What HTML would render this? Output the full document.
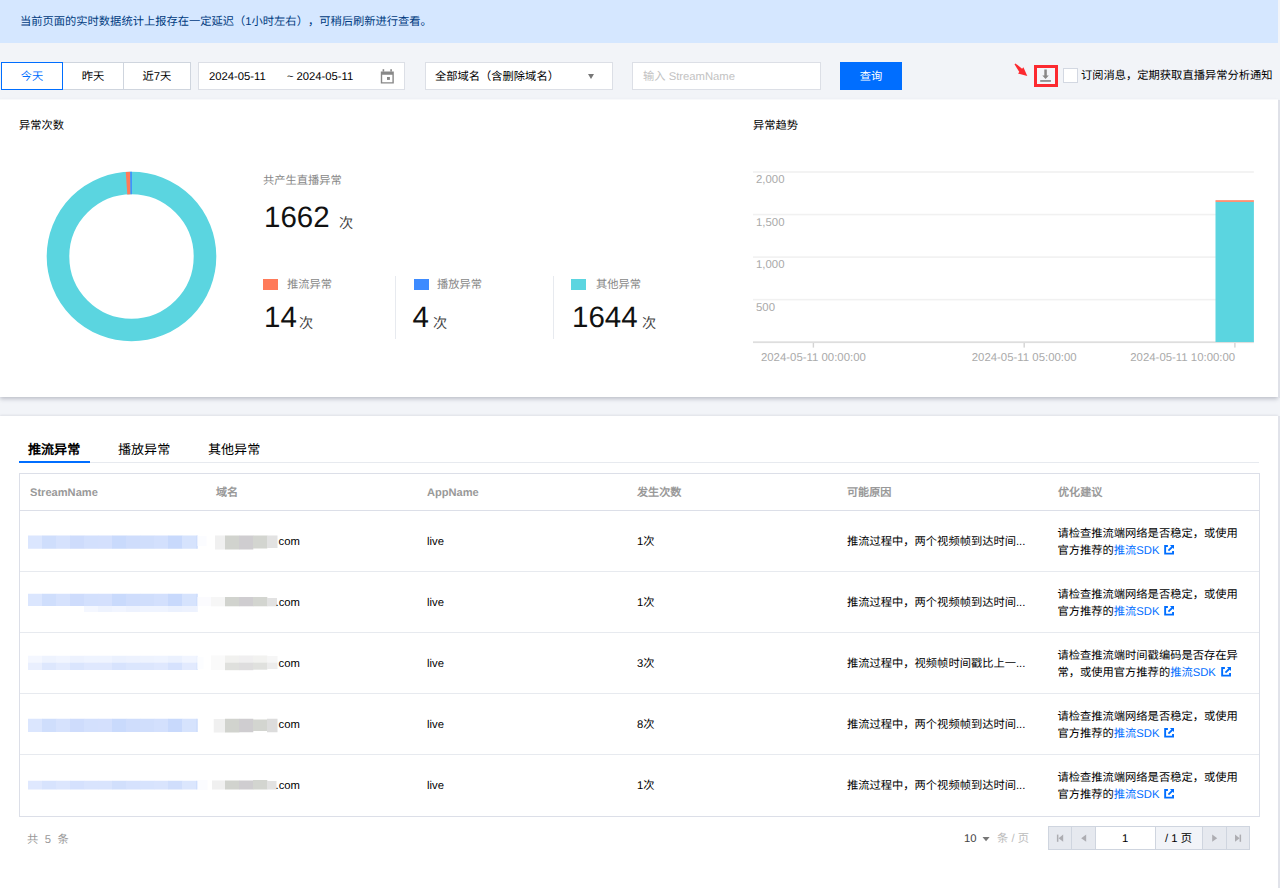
<!DOCTYPE html>
<html lang="zh-CN">
<head>
<meta charset="utf-8">
<title>异常分析</title>
<style>
*{box-sizing:border-box;margin:0;padding:0}
html,body{width:1280px;height:888px;overflow:hidden}
body{position:relative;text-spacing-trim:space-all;text-rendering:geometricPrecision;background:#f2f4f8;font-family:"Liberation Sans",sans-serif;font-size:11.28px;color:#000;line-height:1}
.abs{position:absolute;white-space:nowrap}
.banner{position:absolute;left:0;top:0;width:1278px;height:43px;background:#d5e7ff}
.banner span{position:absolute;left:20px;top:16.9px;color:#003b80;font-size:11.28px;white-space:nowrap}
.seg{position:absolute;top:62px;height:28px;background:#fff;border:1px solid #cfd5de;text-align:center;line-height:28px;font-size:11.28px;color:#000}
.seg.on{border-color:#006eff;color:#006eff;z-index:2}
.inp{position:absolute;top:62px;height:28px;background:#fff;border:1px solid #dcdfe6;font-size:11.28px;line-height:26px}
.card{position:absolute;left:0;width:1278px;background:#fff}
.c1{top:100px;height:297px;box-shadow:0 2px 4px rgba(54,58,80,.28)}
.c2{top:416px;height:472px;box-shadow:0 -1px 2px rgba(54,58,80,.10)}
.t{position:absolute;white-space:nowrap;font-size:11.28px}
.g{color:#888}
.big{font-size:29.5px;color:#111}
.hl{position:absolute;height:1px;background:#e7eaef}
.vl{position:absolute;width:1px;background:#e7eaef}
.ax{color:#aaa;font-size:11.28px}
.tab{font-size:13.07px;color:#000}
.th{color:#999;font-weight:bold;font-size:11.1px}
</style>
</head>
<body>
<div class="banner"><span>当前页面的实时数据统计上报存在一定延迟（1小时左右），可稍后刷新进行查看。</span></div>

<!-- toolbar -->
<div class="seg on" style="left:1px;width:62px">今天</div>
<div class="seg" style="left:62px;width:62px">昨天</div>
<div class="seg" style="left:123px;width:68px">近7天</div>
<div class="inp" style="left:198px;width:207px"></div>
<div class="t" style="left:209px;top:71.8px">2024-05-11</div>
<div class="t" style="left:287px;top:71.8px">~</div><div class="t" style="left:296.5px;top:71.8px">2024-05-11</div>
<svg class="abs" style="left:379px;top:68px" width="16" height="17" viewBox="379 68 16 17"><path d="M380.8,71.4 H393.8 V83.6 H380.8 Z M382.2,74.8 V82.2 H392.4 V74.8 Z" fill="#888" fill-rule="evenodd"/><rect x="382.6" y="69.2" width="1.6" height="2.4" fill="#888"/><rect x="390.3" y="69.2" width="1.6" height="2.4" fill="#888"/><rect x="387" y="77" width="2.9" height="2.9" fill="#888"/></svg>
<div class="inp" style="left:425px;width:188px"></div>
<div class="abs" style="left:587.5px;top:74px;width:0;height:0;border-left:3.7px solid transparent;border-right:3.7px solid transparent;border-top:5px solid #777"></div>
<div class="t" style="left:435px;top:71.5px">全部域名（含删除域名）</div>
<div class="inp" style="left:632px;width:188.5px"></div>
<div class="t" style="left:643px;top:71.5px;color:#c2c2c2">输入 StreamName</div>
<div class="abs" style="left:840px;top:62px;width:62px;height:28px;background:#006eff;color:#fff;text-align:center;line-height:30px;font-size:11.28px">查询</div>
<div class="abs" style="left:1034px;top:65px;width:24px;height:22px;border:3px solid #fc2a30;background:#f3f6fa"></div>
<svg class="abs" style="left:1038px;top:67px" width="16" height="18" viewBox="1038 67 16 18"><path d="M1044.3,69.4 H1046.8 V75.4 H1048.8 L1045.55,78.9 L1042.3,75.4 H1044.3 Z" fill="#888"/><rect x="1040.2" y="80.1" width="10.7" height="1.7" fill="#888"/></svg>
<svg class="abs" style="left:1012px;top:61px" width="18" height="18" viewBox="1012 61 18 18"><path d="M1014.5,64.3 L1015.5,63.4 L1022.1,68.8 L1023.4,67.2 L1027.3,76.1 L1018.0,73.6 L1019.3,72.0 Z" fill="#fc2a30"/></svg>
<div class="abs" style="left:1063px;top:68px;width:15px;height:15px;border:1px solid #d3d8e2;background:#fff"></div>
<div class="t" style="left:1081px;top:71.3px">订阅消息，定期获取直播异常分析通知</div>

<div class="card c1"></div>
<div class="card c2"></div>

<!-- card 1 : counts -->
<div class="t" style="left:19px;top:121px;color:#000">异常次数</div>
<svg class="abs" style="left:41px;top:166px" width="181" height="181" viewBox="-90.5 -90.5 181 181">
  <circle cx="0" cy="0" r="73.5" fill="none" stroke="#5bd5e0" stroke-width="22.6"/>
  <path d="M-5.75,-84.6 L-1.3,-84.8 L-1.0,-62.2 L-4.2,-62.1 Z" fill="#ff7a59"/>
  <path d="M-1.3,-84.8 L0.4,-84.8 L0.4,-62.2 L-1.0,-62.2 Z" fill="#3d8bff"/>
</svg>
<div class="t g" style="left:263px;top:175.6px">共产生直播异常</div>
<div class="t big" style="left:264px;top:203px">1662</div>
<div class="t" style="left:339px;top:216.5px;font-size:14.2px;color:#444">次</div>

<div class="abs" style="left:263px;top:279px;width:15px;height:11px;background:#ff7a59"></div>
<div class="t g" style="left:287px;top:279.6px">推流异常</div>
<div class="t big" style="left:264px;top:303px">14</div>
<div class="t" style="left:299px;top:317px;font-size:14.2px;color:#444">次</div>
<div class="vl" style="left:395px;top:276px;height:63px"></div>

<div class="abs" style="left:413.5px;top:279px;width:15px;height:11px;background:#3d8bff"></div>
<div class="t g" style="left:437px;top:279.6px">播放异常</div>
<div class="t big" style="left:412.6px;top:303px">4</div>
<div class="t" style="left:433px;top:317px;font-size:14.2px;color:#444">次</div>
<div class="vl" style="left:553px;top:276px;height:63px"></div>

<div class="abs" style="left:571px;top:279px;width:15px;height:11px;background:#5bd5e0"></div>
<div class="t g" style="left:596px;top:279.6px">其他异常</div>
<div class="t big" style="left:572px;top:303px">1644</div>
<div class="t" style="left:642px;top:317px;font-size:14.2px;color:#444">次</div>

<!-- card 1 : trend chart -->
<div class="t" style="left:753px;top:121px;color:#000">异常趋势</div>
<svg class="abs" style="left:740px;top:160px" width="538" height="215" viewBox="740 160 538 215" font-family="Liberation Sans, sans-serif" font-size="11.4" fill="#aaa">
<rect x="753" y="171.20" width="500.9" height="1.6" fill="#f1f1f1"/>
<rect x="753" y="213.75" width="500.9" height="1.6" fill="#f1f1f1"/>
<rect x="753" y="256.30" width="500.9" height="1.6" fill="#f1f1f1"/>
<rect x="753" y="298.85" width="500.9" height="1.6" fill="#f1f1f1"/>
<rect x="753" y="341.3" width="500.9" height="1.8" fill="#dedede"/>
<rect x="812.7" y="343" width="1.4" height="4.6" fill="#d4d4d4"/>
<rect x="1023.5" y="343" width="1.4" height="4.6" fill="#d4d4d4"/>
<rect x="1234.2" y="343" width="1.4" height="4.6" fill="#d4d4d4"/>
<rect x="1215.5" y="201.8" width="38.4" height="140.2" fill="#5bd5e0"/>
<rect x="1215.5" y="200.2" width="38.4" height="1.7" fill="#ff8566"/>
<text x="756" y="183.20">2,000</text>
<text x="756" y="225.75">1,500</text>
<text x="756" y="268.30">1,000</text>
<text x="756" y="310.85">500</text>
<text x="813.4" y="360.9" text-anchor="middle">2024-05-11 00:00:00</text>
<text x="1024.2" y="360.9" text-anchor="middle">2024-05-11 05:00:00</text>
<text x="1235.2" y="360.9" text-anchor="end">2024-05-11 10:00:00</text>
</svg>

<!-- card 2 : tabs -->
<div class="t tab" style="left:28px;top:443px;font-weight:bold">推流异常</div>
<div class="t tab" style="left:118px;top:443px">播放异常</div>
<div class="t tab" style="left:208px;top:443px">其他异常</div>
<div class="hl" style="left:19px;top:462px;width:1240px;background:#e7eaef"></div>
<div class="abs" style="left:19px;top:461px;width:71px;height:2px;background:#006eff"></div>

<!-- table -->
<div class="abs" style="left:19px;top:473px;width:1241px;height:344px;border:1px solid #dcdfe8"></div>
<div class="hl" style="left:20px;top:510px;width:1239px;background:#dcdfe8"></div>
<div class="hl" style="left:20px;top:571px;width:1239px"></div>
<div class="hl" style="left:20px;top:632px;width:1239px"></div>
<div class="hl" style="left:20px;top:693px;width:1239px"></div>
<div class="hl" style="left:20px;top:754px;width:1239px"></div>
<div class="t th" style="left:30px;top:488px">StreamName</div>
<div class="t th" style="left:216px;top:488px">域名</div>
<div class="t th" style="left:427px;top:488px">AppName</div>
<div class="t th" style="left:637px;top:488px">发生次数</div>
<div class="t th" style="left:847px;top:488px">可能原因</div>
<div class="t th" style="left:1058px;top:488px">优化建议</div>
<svg class="abs" style="left:20px;top:512px" width="300" height="303" viewBox="20 512 300 303">
<rect x="28.00" y="535.50" width="14.30" height="13.25" fill="#dbe6fe"/><rect x="42.00" y="535.50" width="14.30" height="13.25" fill="#cfdefc"/><rect x="56.00" y="535.50" width="14.30" height="13.25" fill="#d6e2fd"/><rect x="70.00" y="535.50" width="14.30" height="13.25" fill="#cedcfc"/><rect x="84.00" y="535.50" width="14.30" height="13.25" fill="#d3e0fd"/><rect x="98.00" y="535.50" width="14.30" height="13.25" fill="#d4e0fd"/><rect x="112.00" y="535.50" width="14.30" height="13.25" fill="#c9dafc"/><rect x="126.00" y="535.50" width="14.30" height="13.25" fill="#cfddfc"/><rect x="140.00" y="535.50" width="14.30" height="13.25" fill="#d0defc"/><rect x="154.00" y="535.50" width="14.30" height="13.25" fill="#d3e0fd"/><rect x="168.00" y="535.50" width="14.30" height="13.25" fill="#c8d9fc"/><rect x="182.00" y="535.50" width="14.30" height="13.25" fill="#d6e3fd"/><rect x="196.00" y="535.50" width="1.80" height="13.25" fill="#cfdefc"/>
<rect x="197.5" y="536" width="9" height="10" fill="#fbfcff"/>
<rect x="215" y="535.5" width="10.3" height="14" fill="#f0f0f0"/><rect x="225" y="535.5" width="14.3" height="14" fill="#d1d3ce"/><rect x="239" y="535.5" width="14.3" height="14" fill="#cfcdd0"/><rect x="253" y="535.5" width="14.3" height="13" fill="#d3d5d0"/><rect x="267" y="535.5" width="10.5" height="12.5" fill="#e2e2e2"/>
<rect x="28.00" y="593.75" width="14.30" height="12.25" fill="#dbe6fe"/><rect x="42.00" y="593.75" width="14.30" height="12.25" fill="#cfdefc"/><rect x="56.00" y="593.75" width="14.30" height="12.25" fill="#d6e2fd"/><rect x="70.00" y="593.75" width="14.30" height="12.25" fill="#cedcfc"/><rect x="84.00" y="593.75" width="14.30" height="12.25" fill="#d3e0fd"/><rect x="98.00" y="593.75" width="14.30" height="12.25" fill="#d4e0fd"/><rect x="112.00" y="593.75" width="14.30" height="12.25" fill="#c9dafc"/><rect x="126.00" y="593.75" width="14.30" height="12.25" fill="#cfddfc"/><rect x="140.00" y="593.75" width="14.30" height="12.25" fill="#d0defc"/><rect x="154.00" y="593.75" width="14.30" height="12.25" fill="#d3e0fd"/><rect x="168.00" y="593.75" width="14.30" height="12.25" fill="#c8d9fc"/><rect x="182.00" y="593.75" width="14.30" height="12.25" fill="#d6e3fd"/><rect x="196.00" y="593.75" width="1.80" height="12.25" fill="#cfdefc"/>
<rect x="84.00" y="606.00" width="14.30" height="6.00" fill="#f4f7ff"/><rect x="98.00" y="606.00" width="14.30" height="6.00" fill="#eef3fe"/><rect x="112.00" y="606.00" width="14.30" height="6.00" fill="#f1f5ff"/><rect x="126.00" y="606.00" width="14.30" height="6.00" fill="#edf2fe"/><rect x="140.00" y="606.00" width="14.30" height="6.00" fill="#eff4ff"/><rect x="154.00" y="606.00" width="14.30" height="6.00" fill="#eff4ff"/><rect x="168.00" y="606.00" width="14.30" height="6.00" fill="#ebf1fe"/><rect x="182.00" y="606.00" width="14.30" height="6.00" fill="#edf2fe"/><rect x="196.00" y="606.00" width="1.80" height="6.00" fill="#eef3fe"/>
<rect x="197.5" y="597" width="13.5" height="9" fill="#fbfbfe"/>
<rect x="211" y="597" width="14.3" height="9.3" fill="#f6f6f6"/><rect x="225" y="597" width="14.3" height="9.3" fill="#d1d3ce"/><rect x="239" y="597" width="14.3" height="9.3" fill="#cfcdd0"/><rect x="253" y="597" width="14.3" height="9.3" fill="#d3d5d0"/><rect x="267" y="598" width="10" height="8.3" fill="#e2e2e2"/>
<rect x="28.00" y="655.75" width="14.30" height="6.75" fill="#f4f7ff"/><rect x="42.00" y="655.75" width="14.30" height="6.75" fill="#eef3fe"/><rect x="56.00" y="655.75" width="14.30" height="6.75" fill="#f1f5ff"/><rect x="70.00" y="655.75" width="14.30" height="6.75" fill="#edf2fe"/><rect x="84.00" y="655.75" width="14.30" height="6.75" fill="#eff4ff"/><rect x="98.00" y="655.75" width="14.30" height="6.75" fill="#eff4ff"/><rect x="112.00" y="655.75" width="14.30" height="6.75" fill="#ebf1fe"/><rect x="126.00" y="655.75" width="14.30" height="6.75" fill="#edf2fe"/><rect x="140.00" y="655.75" width="14.30" height="6.75" fill="#eef3fe"/><rect x="154.00" y="655.75" width="14.30" height="6.75" fill="#eff4ff"/><rect x="168.00" y="655.75" width="14.30" height="6.75" fill="#ebf1fe"/><rect x="182.00" y="655.75" width="14.30" height="6.75" fill="#f1f5ff"/><rect x="196.00" y="655.75" width="1.80" height="6.75" fill="#eef3fe"/>
<rect x="28.00" y="662.50" width="14.30" height="7.50" fill="#e9effe"/><rect x="42.00" y="662.50" width="14.30" height="7.50" fill="#dde7fd"/><rect x="56.00" y="662.50" width="14.30" height="7.50" fill="#e3ebfe"/><rect x="70.00" y="662.50" width="14.30" height="7.50" fill="#dae5fd"/><rect x="84.00" y="662.50" width="14.30" height="7.50" fill="#dfe8fe"/><rect x="98.00" y="662.50" width="14.30" height="7.50" fill="#dfe8fe"/><rect x="112.00" y="662.50" width="14.30" height="7.50" fill="#d7e3fd"/><rect x="126.00" y="662.50" width="14.30" height="7.50" fill="#dbe6fd"/><rect x="140.00" y="662.50" width="14.30" height="7.50" fill="#dce6fd"/><rect x="154.00" y="662.50" width="14.30" height="7.50" fill="#dfe8fe"/><rect x="168.00" y="662.50" width="14.30" height="7.50" fill="#d6e2fd"/><rect x="182.00" y="662.50" width="14.30" height="7.50" fill="#e2eafe"/><rect x="196.00" y="662.50" width="1.80" height="7.50" fill="#dbe6fd"/>
<rect x="197.5" y="657" width="6" height="12" fill="#fcfdff"/>
<rect x="211" y="655.5" width="14.3" height="14.5" fill="#fafafa"/><rect x="225" y="655.5" width="14.3" height="7" fill="#f1f1ef"/><rect x="239" y="655.5" width="14.3" height="7" fill="#f0eff0"/><rect x="253" y="655.5" width="14.3" height="7" fill="#f2f2f0"/><rect x="267" y="656" width="10.5" height="6.5" fill="#f6f6f6"/><rect x="225" y="662.5" width="14.3" height="7.7" fill="#dfe0dd"/><rect x="239" y="662.5" width="14.3" height="7.7" fill="#deddde"/><rect x="253" y="662.5" width="14.3" height="7.2" fill="#e0e1de"/><rect x="267" y="662.5" width="10.5" height="6.5" fill="#ececec"/>
<rect x="28.00" y="718.75" width="14.30" height="13.25" fill="#dbe6fe"/><rect x="42.00" y="718.75" width="14.30" height="13.25" fill="#cfdefc"/><rect x="56.00" y="718.75" width="14.30" height="13.25" fill="#d6e2fd"/><rect x="70.00" y="718.75" width="14.30" height="13.25" fill="#cedcfc"/><rect x="84.00" y="718.75" width="14.30" height="13.25" fill="#d3e0fd"/><rect x="98.00" y="718.75" width="14.30" height="13.25" fill="#d4e0fd"/><rect x="112.00" y="718.75" width="14.30" height="13.25" fill="#c9dafc"/><rect x="126.00" y="718.75" width="14.30" height="13.25" fill="#cfddfc"/><rect x="140.00" y="718.75" width="14.30" height="13.25" fill="#d0defc"/><rect x="154.00" y="718.75" width="14.30" height="13.25" fill="#d3e0fd"/><rect x="168.00" y="718.75" width="14.30" height="13.25" fill="#c8d9fc"/><rect x="182.00" y="718.75" width="14.30" height="13.25" fill="#d6e3fd"/><rect x="196.00" y="718.75" width="1.80" height="13.25" fill="#cfdefc"/>
<rect x="213.75" y="719" width="11.5" height="13.5" fill="#f0f0f0"/><rect x="225" y="718.75" width="14.3" height="13.75" fill="#d1d3ce"/><rect x="239" y="718.75" width="14.3" height="13.5" fill="#cfcdd0"/><rect x="253" y="719.5" width="14.3" height="11.5" fill="#d3d5d0"/><rect x="267" y="718.75" width="10.5" height="13.5" fill="#dcdcdc"/>
<rect x="28.00" y="780.75" width="14.30" height="8.75" fill="#dfe8fe"/><rect x="42.00" y="780.75" width="14.30" height="8.75" fill="#d7e3fd"/><rect x="56.00" y="780.75" width="14.30" height="8.75" fill="#dce6fd"/><rect x="70.00" y="780.75" width="14.30" height="8.75" fill="#d5e1fd"/><rect x="84.00" y="780.75" width="14.30" height="8.75" fill="#d9e4fd"/><rect x="98.00" y="780.75" width="14.30" height="8.75" fill="#d9e4fd"/><rect x="112.00" y="780.75" width="14.30" height="8.75" fill="#d1dffc"/><rect x="126.00" y="780.75" width="14.30" height="8.75" fill="#d6e2fd"/><rect x="140.00" y="780.75" width="14.30" height="8.75" fill="#d7e3fd"/><rect x="154.00" y="780.75" width="14.30" height="8.75" fill="#d9e4fd"/><rect x="168.00" y="780.75" width="14.30" height="8.75" fill="#d0defc"/><rect x="182.00" y="780.75" width="14.30" height="8.75" fill="#dbe6fd"/><rect x="196.00" y="780.75" width="1.80" height="8.75" fill="#cfdefc"/>
<rect x="197.5" y="780" width="10" height="10" fill="#fbfcff"/>
<rect x="212" y="780.5" width="13.3" height="9" fill="#f0f0f0"/><rect x="225" y="780.5" width="14.3" height="9" fill="#d1d3ce"/><rect x="239" y="780.5" width="14.3" height="9" fill="#cfcdd0"/><rect x="253" y="780" width="14.3" height="9.5" fill="#d3d5d0"/><rect x="267" y="781" width="9.5" height="8.5" fill="#e2e2e2"/>
</svg>
<div class="t" style="left:278.5px;top:536.8px">com</div>
<div class="t" style="left:427px;top:536.8px">live</div>
<div class="t" style="left:637px;top:536.8px">1次</div>
<div class="t" style="left:847px;top:536.8px">推流过程中，两个视频帧到达时间...</div>
<div class="t" style="left:1057.5px;top:529px">请检查推流端网络是否稳定，或使用</div>
<div class="t" style="left:1057.5px;top:546px">官方推荐的<span style="color:#006eff">推流SDK</span></div>
<svg class="abs" style="left:1164.0px;top:544.8px" width="10.4" height="10" viewBox="-0.2 -0.1 10.4 10"><path d="M0,0 H3.7 V1.9 H1.9 V7.6 H7.9 V5.9 H9.8 V9.5 H0 Z" fill="#006eff"/><path d="M5.7,0 H9.8 V4 Z" fill="#006eff"/><path d="M8.2,1.6 L4.2,5.5" stroke="#006eff" stroke-width="1.9" fill="none"/></svg>
<div class="t" style="left:275.5px;top:597.8px">.com</div>
<div class="t" style="left:427px;top:597.8px">live</div>
<div class="t" style="left:637px;top:597.8px">1次</div>
<div class="t" style="left:847px;top:597.8px">推流过程中，两个视频帧到达时间...</div>
<div class="t" style="left:1057.5px;top:590px">请检查推流端网络是否稳定，或使用</div>
<div class="t" style="left:1057.5px;top:607px">官方推荐的<span style="color:#006eff">推流SDK</span></div>
<svg class="abs" style="left:1164.0px;top:605.8px" width="10.4" height="10" viewBox="-0.2 -0.1 10.4 10"><path d="M0,0 H3.7 V1.9 H1.9 V7.6 H7.9 V5.9 H9.8 V9.5 H0 Z" fill="#006eff"/><path d="M5.7,0 H9.8 V4 Z" fill="#006eff"/><path d="M8.2,1.6 L4.2,5.5" stroke="#006eff" stroke-width="1.9" fill="none"/></svg>
<div class="t" style="left:278.5px;top:658.8px">com</div>
<div class="t" style="left:427px;top:658.8px">live</div>
<div class="t" style="left:637px;top:658.8px">3次</div>
<div class="t" style="left:847px;top:658.8px">推流过程中，视频帧时间戳比上一...</div>
<div class="t" style="left:1057.5px;top:651px">请检查推流端时间戳编码是否存在异</div>
<div class="t" style="left:1057.5px;top:668px">常，或使用官方推荐的<span style="color:#006eff">推流SDK</span></div>
<svg class="abs" style="left:1220.6px;top:666.8px" width="10.4" height="10" viewBox="-0.2 -0.1 10.4 10"><path d="M0,0 H3.7 V1.9 H1.9 V7.6 H7.9 V5.9 H9.8 V9.5 H0 Z" fill="#006eff"/><path d="M5.7,0 H9.8 V4 Z" fill="#006eff"/><path d="M8.2,1.6 L4.2,5.5" stroke="#006eff" stroke-width="1.9" fill="none"/></svg>
<div class="t" style="left:278.5px;top:719.8px">com</div>
<div class="t" style="left:427px;top:719.8px">live</div>
<div class="t" style="left:637px;top:719.8px">8次</div>
<div class="t" style="left:847px;top:719.8px">推流过程中，两个视频帧到达时间...</div>
<div class="t" style="left:1057.5px;top:712px">请检查推流端网络是否稳定，或使用</div>
<div class="t" style="left:1057.5px;top:729px">官方推荐的<span style="color:#006eff">推流SDK</span></div>
<svg class="abs" style="left:1164.0px;top:727.8px" width="10.4" height="10" viewBox="-0.2 -0.1 10.4 10"><path d="M0,0 H3.7 V1.9 H1.9 V7.6 H7.9 V5.9 H9.8 V9.5 H0 Z" fill="#006eff"/><path d="M5.7,0 H9.8 V4 Z" fill="#006eff"/><path d="M8.2,1.6 L4.2,5.5" stroke="#006eff" stroke-width="1.9" fill="none"/></svg>
<div class="t" style="left:275.5px;top:780.8px">.com</div>
<div class="t" style="left:427px;top:780.8px">live</div>
<div class="t" style="left:637px;top:780.8px">1次</div>
<div class="t" style="left:847px;top:780.8px">推流过程中，两个视频帧到达时间...</div>
<div class="t" style="left:1057.5px;top:773px">请检查推流端网络是否稳定，或使用</div>
<div class="t" style="left:1057.5px;top:790px">官方推荐的<span style="color:#006eff">推流SDK</span></div>
<svg class="abs" style="left:1164.0px;top:788.8px" width="10.4" height="10" viewBox="-0.2 -0.1 10.4 10"><path d="M0,0 H3.7 V1.9 H1.9 V7.6 H7.9 V5.9 H9.8 V9.5 H0 Z" fill="#006eff"/><path d="M5.7,0 H9.8 V4 Z" fill="#006eff"/><path d="M8.2,1.6 L4.2,5.5" stroke="#006eff" stroke-width="1.9" fill="none"/></svg>

<!-- footer / pagination -->
<div class="t g" style="left:27px;top:834.5px;letter-spacing:1.7px;color:#999">共 5 条</div>
<div class="t" style="left:964px;top:833.6px;color:#444">10</div>
<svg class="abs" style="left:981px;top:835px" width="10" height="8" viewBox="981 835 10 8"><path d="M982.5,837 H989.6 L986.05,841.2 Z" fill="#777"/></svg>
<div class="t" style="left:997px;top:833.8px;color:#bbb">条 / 页</div>
<div class="abs" style="left:1048px;top:826px;width:202px;height:24px;border:1px solid #cfd5df;background:#e6e9ef"></div>
<div class="abs" style="left:1096px;top:827px;width:60px;height:22px;background:#fff"></div>
<div class="abs" style="left:1156px;top:827px;width:46px;height:22px;background:#f2f4f8"></div>
<div class="vl" style="left:1071px;top:827px;height:22px;background:#cfd5df"></div>
<div class="vl" style="left:1095px;top:827px;height:22px;background:#cfd5df"></div>
<div class="vl" style="left:1155px;top:827px;height:22px;background:#cfd5df"></div>
<div class="vl" style="left:1202px;top:827px;height:22px;background:#cfd5df"></div>
<div class="vl" style="left:1226px;top:827px;height:22px;background:#cfd5df"></div>
<svg class="abs" style="left:1049px;top:827px" width="200" height="22" viewBox="1049 827 200 22" fill="#adadb2">
<rect x="1056.9" y="834.6" width="1.5" height="7.2"/><path d="M1063.2,834.6 V841.8 L1058.6,838.2 Z"/>
<path d="M1086.2,834.6 V841.8 L1081.2,838.2 Z"/>
<path d="M1212.2,834.6 V841.8 L1217.2,838.2 Z"/>
<path d="M1235,834.6 V841.8 L1239.6,838.2 Z"/><rect x="1239.6" y="834.6" width="1.5" height="7.2"/>
</svg>
<div class="t" style="left:1122px;top:833.6px;color:#000">1</div>
<div class="t" style="left:1165px;top:834px;color:#000">/ 1 页</div>
<!-- right edge strip -->
<div class="abs" style="left:1278px;top:100px;width:2px;height:298px;background:#dfe1e8"></div>
<div class="abs" style="left:1278px;top:416px;width:2px;height:472px;background:#e1e3ea"></div>
<div class="abs" style="left:0;top:99px;width:1278px;height:1px;background:#f8f9fb"></div>
</body>
</html>
